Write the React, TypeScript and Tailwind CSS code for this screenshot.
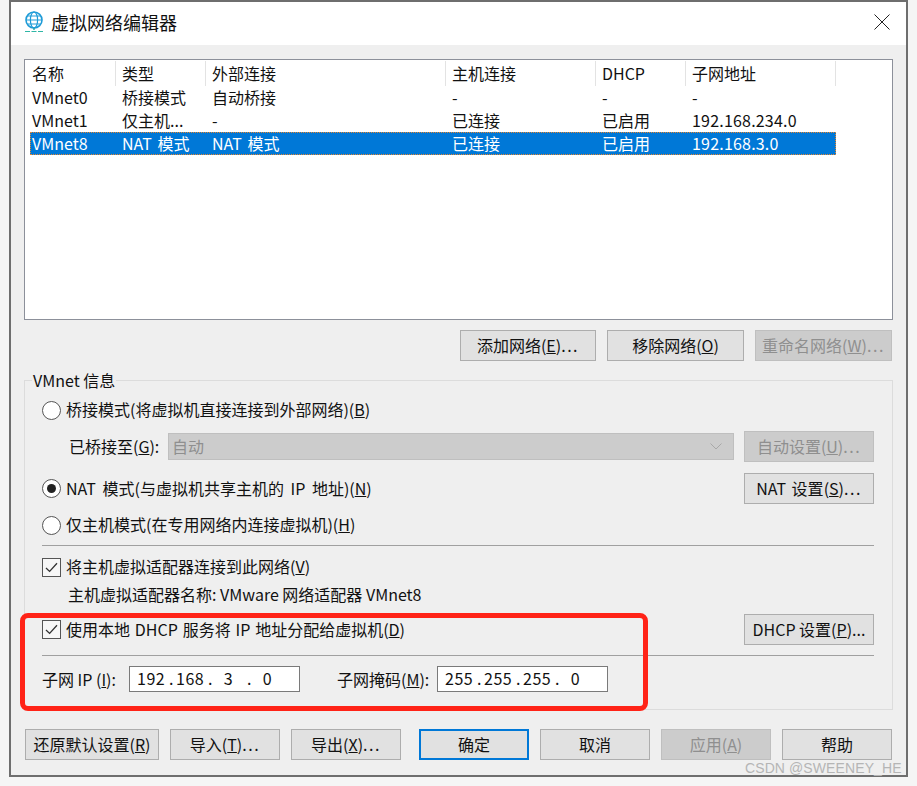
import React from "react";

const Btn = ({ w, children, disabled, primary }: { w: string; children: React.ReactNode; disabled?: boolean; primary?: boolean }) => (
  <div
    className={`${w} h-[31px] shrink-0 flex items-center justify-center whitespace-nowrap pb-[2px] ${
      disabled
        ? "bg-[#cccccc] border border-[#bfbfbf] text-[#8f8f8f]"
        : primary
        ? "bg-[#e1e1e1] border-2 border-[#0078d7] text-[#111111]"
        : "bg-[#e1e1e1] border border-[#adadad] text-[#111111]"
    }`}
  >
    <span>{children}</span>
  </div>
);

const Dots = () => <span className="tracking-[1.5px]">...</span>;

const Radio = ({ on }: { on?: boolean }) => (
  <div className="w-[19px] h-[19px] shrink-0 rounded-full border border-[#555555] bg-white flex items-center justify-center">
    {on && <div className="w-[9px] h-[9px] rounded-full bg-[#222222]" />}
  </div>
);

const Check = () => (
  <div className="w-[19px] h-[19px] shrink-0 border border-[#555555] bg-[#f7f7f7] flex items-center justify-center">
    <svg width="13" height="11" viewBox="0 0 13 11" fill="none">
      <path d="M1 6 L4.6 9.4 L12 1.2" stroke="#333333" strokeWidth="1.3" />
    </svg>
  </div>
);

const Ip = ({ parts }: { parts: string[] }) => (
  <div className="w-[171px] h-[26px] bg-white border border-[#7a7a7a] flex items-center pl-[7px] pb-[2px] tracking-[0.5px]">
    {parts.map((p, i) => (
      <React.Fragment key={i}>
        <span className="w-[27px] text-center">{p}</span>
        {i < 3 && <span className="w-[12px] text-right pr-[2px]">.</span>}
      </React.Fragment>
    ))}
  </div>
);

const cols = "grid grid-cols-[86px_90px_240px_150px_90px_150px] w-[806px]";

const rows = [
  ["VMnet0", "桥接模式", "自动桥接", "-", "-", "-"],
  ["VMnet1", "仅主机...", "-", "已连接", "已启用", "192.168.234.0"],
  ["VMnet8", "NAT 模式", "NAT 模式", "已连接", "已启用", "192.168.3.0"],
];

export default function App() {
  return (
    <div className="relative w-[917px] h-[786px] overflow-hidden bg-[#f5f5f5] text-[16px] leading-[22px] text-[#111111] font-['Noto_Sans_CJK_SC','Noto_Sans',sans-serif]">
      <div className="ml-[9px] w-[899px] h-[777px] border-2 border-[#6e6e6e] bg-[#efefef] flex flex-col">
        {/* title bar */}
        <div className="h-[43px] shrink-0 bg-white flex items-center pl-[13px] pr-[16px] pb-[3px]">
          <svg width="20" height="22" viewBox="0 0 20 22" fill="none" className="shrink-0">
            <circle cx="10" cy="9" r="8" stroke="#1e9bd7" strokeWidth="1.6" />
            <ellipse cx="10" cy="9" rx="3.6" ry="8" stroke="#1e9bd7" strokeWidth="1.2" />
            <path d="M2 9 H18 M3.2 5 H16.8 M3.2 13 H16.8" stroke="#1e9bd7" strokeWidth="1.2" />
            <path d="M10 17 V19" stroke="#2aa7a0" strokeWidth="1.4" />
            <path d="M1 20.5 H19" stroke="#2fb6a6" strokeWidth="1.2" strokeDasharray="5 1.5" />
          </svg>
          <span className="ml-[7px] text-[18px] leading-[24px] text-[#111111]">虚拟网络编辑器</span>
          <svg width="16" height="16" viewBox="0 0 16 16" className="ml-auto" fill="none">
            <path d="M0.5 0.5 L15.5 15.5 M15.5 0.5 L0.5 15.5" stroke="#222222" strokeWidth="1" />
          </svg>
        </div>

        {/* client */}
        <div className="flex-1 pt-[14px] px-[13px] flex flex-col">
          {/* list */}
          <div className="h-[261px] shrink-0 bg-white border border-[#8c909a] pt-[1px] pl-[5px]">
            <div className={`${cols} h-[25px] items-center`}>
              {["名称", "类型", "外部连接", "主机连接", "DHCP", "子网地址"].map((h, i) => (
                <div key={h} className={`h-full flex items-center border-r border-[#e3e3e3] pb-[2px] ${i === 0 ? "pl-[2px]" : "pl-[6px]"}`}>
                  {h}
                </div>
              ))}
            </div>
            <div className="flex flex-col">
              {rows.map((r, ri) => (
                <div
                  key={r[0]}
                  className={`${cols} h-[23px] items-center pb-[2px] ${
                    ri === 2 ? "bg-[#0078d7] text-white outline-1 outline-dotted outline-[#e8872e] -outline-offset-1" : ""
                  }`}
                >
                  {r.map((c, ci) => (
                    <div
                      key={ci}
                      className={`whitespace-nowrap [word-spacing:2px] ${ci === 0 ? "pl-[2px]" : "pl-[6px]"} ${ci === 5 ? "tracking-[0.2px]" : ""}`}
                    >
                      {c}
                    </div>
                  ))}
                </div>
              ))}
            </div>
          </div>

          {/* list buttons */}
          <div className="mt-[10px] pr-[1px] flex justify-end gap-[11px]">
            <Btn w="w-[136px]">添加网络(<u>E</u>)<Dots /></Btn>
            <Btn w="w-[137px]">移除网络(<u>O</u>)</Btn>
            <Btn w="w-[137px]" disabled>重命名网络(<u>W</u>)<Dots /></Btn>
          </div>

          {/* group */}
          <div className="relative mt-[19px] h-[330px] shrink-0 border border-[#dcdcdc] pt-[18px] pl-[17px] pr-[18px]">
            <span className="absolute left-[7px] -top-[12px] px-[1px] bg-[#efefef]">VMnet 信息</span>

            <div className="h-[22px] flex items-center gap-[5px]">
              <Radio />
              <span className="pb-[2px]">桥接模式(将虚拟机直接连接到外部网络)(<u>B</u>)</span>
            </div>

            <div className="mt-[10px] h-[31px] flex items-center">
              <span className="ml-[27px] w-[99px] whitespace-nowrap pb-[2px]">已桥接至(<u>G</u>):</span>
              <div className="w-[566px] h-[27px] bg-[#cccccc] border border-[#bfbfbf] flex items-center justify-between pl-[3px] pr-[11px] pb-[2px] text-[#8f8f8f]">
                <span>自动</span>
                <svg width="12" height="7" viewBox="0 0 12 7" fill="none" className="mt-[2px]">
                  <path d="M0.5 0.5 L6 6 L11.5 0.5" stroke="#a8a8a8" strokeWidth="1" />
                </svg>
              </div>
              <div className="ml-auto">
                <Btn w="w-[130px]" disabled>自动设置(<u>U</u>)<Dots /></Btn>
              </div>
            </div>

            <div className="mt-[11px] h-[31px] flex items-center gap-[5px]">
              <Radio on />
              <span className="pb-[2px] [word-spacing:3px]">NAT 模式(与虚拟机共享主机的 IP 地址)(<u>N</u>)</span>
              <div className="ml-auto">
                <Btn w="w-[130px]"><span className="[word-spacing:2px]">NAT 设置</span>(<u>S</u>)<Dots /></Btn>
              </div>
            </div>

            <div className="mt-[10px] h-[22px] flex items-center gap-[5px]">
              <Radio />
              <span className="pb-[2px]">仅主机模式(在专用网络内连接虚拟机)(<u>H</u>)</span>
            </div>

            <div className="mt-[9px] h-px bg-[#a0a0a0]" />

            <div className="mt-[10px] h-[22px] flex items-center gap-[5px]">
              <Check />
              <span className="pb-[2px]">将主机虚拟适配器连接到此网络(<u>V</u>)</span>
            </div>

            <div className="mt-[6px] h-[22px] ml-[26px] whitespace-nowrap -translate-y-px">主机虚拟适配器名称: VMware 网络适配器 VMnet8</div>

            <div className="mt-[8px] h-[31px] flex items-center gap-[5px]">
              <Check />
              <span className="pb-[2px] [word-spacing:1.25px]">使用本地 DHCP 服务将 IP 地址分配给虚拟机(<u>D</u>)</span>
              <div className="ml-auto">
                <Btn w="w-[130px]">DHCP 设置(<u>P</u>)...</Btn>
              </div>
            </div>

            <div className="mt-[10px] h-px bg-[#a0a0a0]" />

            <div className="mt-[10px] h-[26px] flex items-center">
              <span className="w-[87px] whitespace-nowrap">子网 IP (<u>I</u>):</span>
              <Ip parts={["192", "168", "3", "0"]} />
              <span className="ml-[37px] w-[100px] whitespace-nowrap">子网掩码(<u>M</u>):</span>
              <Ip parts={["255", "255", "255", "0"]} />
            </div>
          </div>

          {/* bottom buttons */}
          <div className="mt-[19px] pl-[1px] flex items-center">
            <Btn w="w-[134px]">还原默认设置(<u>R</u>)</Btn>
            <div className="ml-[11px]"><Btn w="w-[110px]">导入(<u>T</u>)<Dots /></Btn></div>
            <div className="ml-[11px]"><Btn w="w-[110px]">导出(<u>X</u>)<Dots /></Btn></div>
            <div className="ml-[18px]"><Btn w="w-[110px]" primary>确定</Btn></div>
            <div className="ml-[11px]"><Btn w="w-[110px]">取消</Btn></div>
            <div className="ml-[11px]"><Btn w="w-[110px]" disabled>应用(<u>A</u>)</Btn></div>
            <div className="ml-[11px]"><Btn w="w-[110px]">帮助</Btn></div>
          </div>
        </div>
      </div>

      {/* annotation overlays */}
      <div className="absolute left-[20px] top-[613px] w-[628px] h-[98px] border-[5px] border-[#ff2317] rounded-[8px] pointer-events-none" />
      <span className="absolute left-[745px] top-[758px] whitespace-nowrap text-[14px] leading-[20px] tracking-[0.1px] text-[#b5b5b5] font-['Liberation_Sans',sans-serif]">CSDN @SWEENEY_HE</span>
    </div>
  );
}
